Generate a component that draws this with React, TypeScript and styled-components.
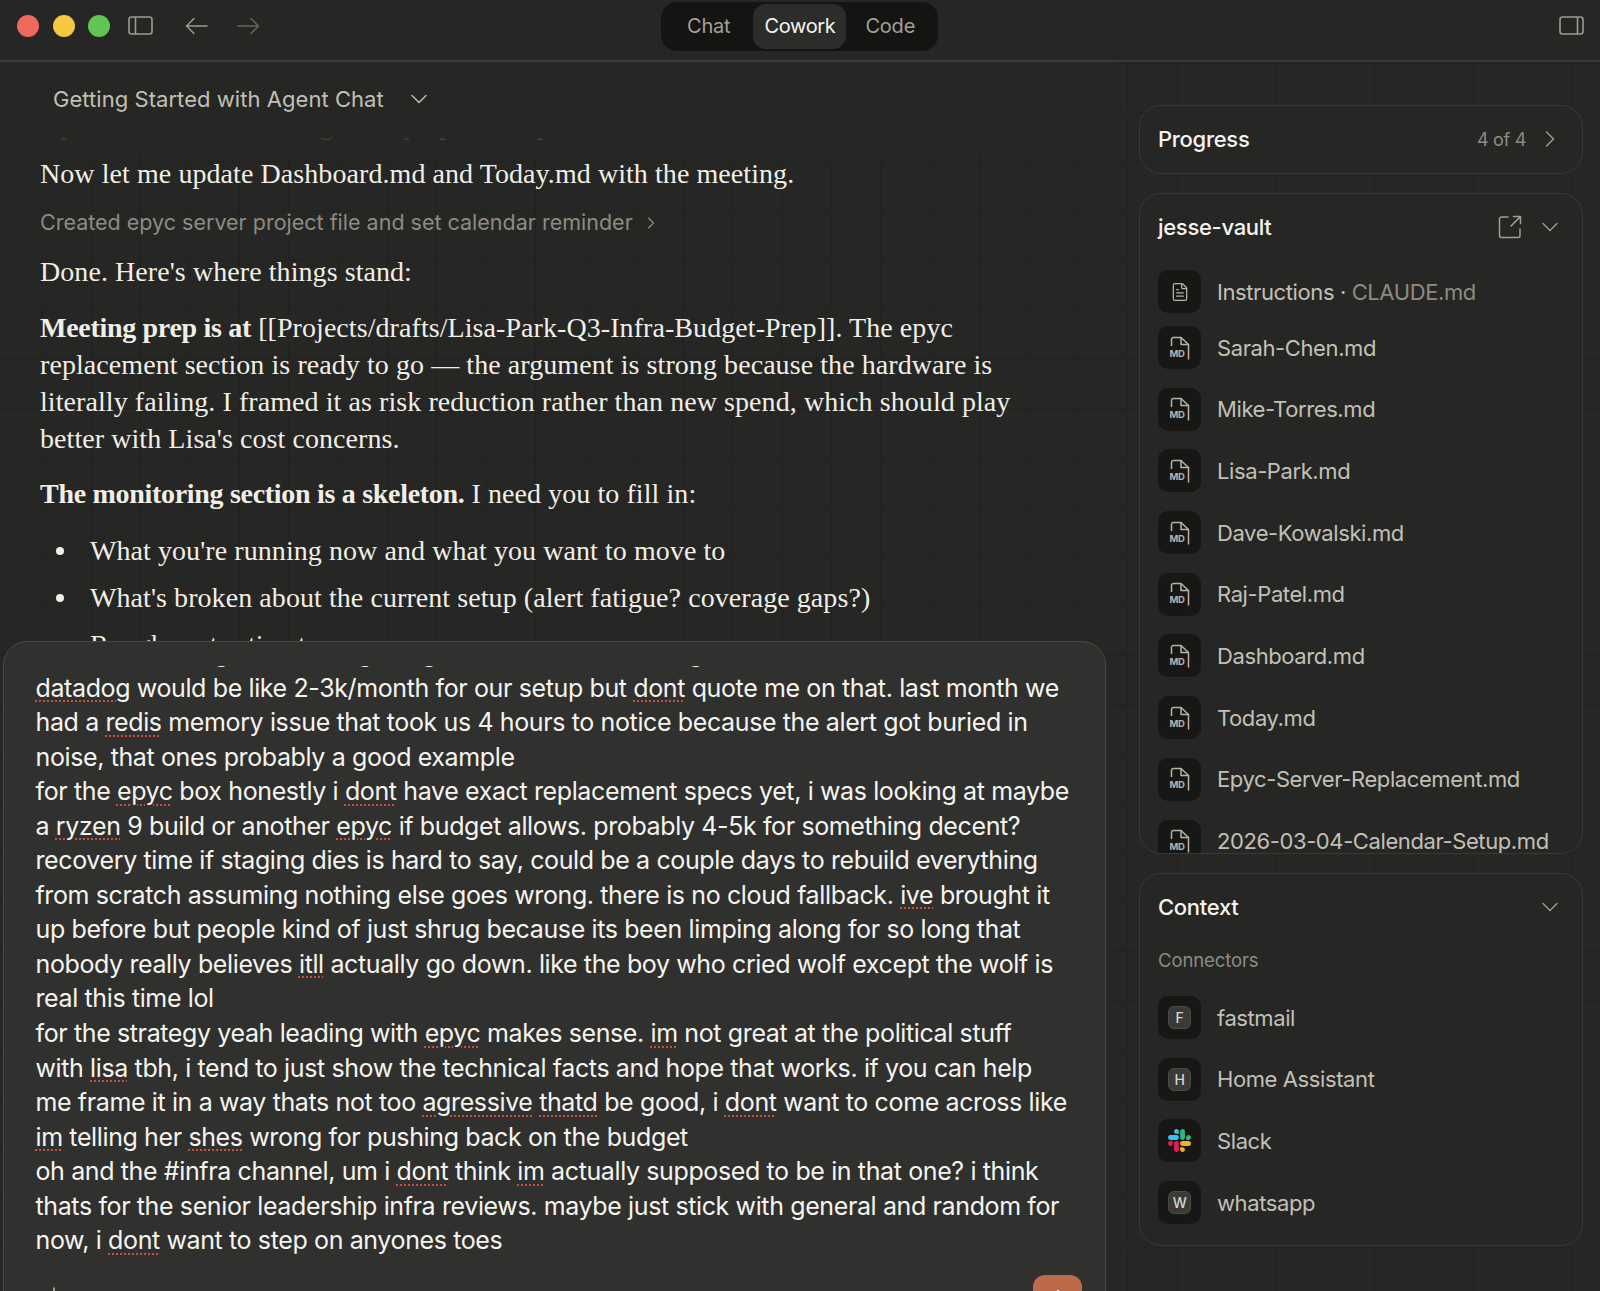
import React from "react";
import styled, { createGlobalStyle } from "styled-components";
import { ChevronDown, ChevronRight, FileText, Plus, ArrowUp } from "lucide-react";

const SANS = `"Inter", "Liberation Sans", sans-serif`;
const SERIF = `"Liberation Serif", "Noto Serif", serif`;

const Global = createGlobalStyle`
  html, body { margin: 0; padding: 0; height: 100%; background: #262624; overflow: hidden; }
  * { box-sizing: border-box; }
  #root { height: 1291px; }
`;

const Window = styled.div`
  width: 1600px;
  height: 1291px;
  display: flex;
  flex-direction: column;
  background: #262624;
  font-family: ${SANS};
  overflow: hidden;
`;

const TitleBar = styled.header`
  height: 62px;
  flex: none;
  display: grid;
  grid-template-columns: 1fr auto 1fr;
  padding: 2px 16px 0 17px;
  border-bottom: 2px solid #3b3b39;
`;

const LeftControls = styled.div`
  display: flex;
  align-items: center;
  height: 47px;
  color: #9c9a92;
`;

const Light = styled.span<{ $c: string }>`
  width: 22px;
  height: 22px;
  border-radius: 50%;
  background: ${(p) => p.$c};
  margin-right: 13.5px;
`;

const PanelToggle = styled.span`
  display: flex;
  margin-left: 4px;
`;

const NavBtn = styled.span<{ $dim?: boolean }>`
  display: flex;
  margin-left: ${(p) => (p.$dim ? "29px" : "32px")};
  color: ${(p) => (p.$dim ? "#65645f" : "#9c9a92")};
`;

const Segments = styled.nav`
  width: 277px;
  height: 49px;
  margin-right: 2px;
  display: flex;
  align-items: center;
  padding: 0 15px 0 26px;
  background: #141413;
  border-radius: 16px;
`;

const Segment = styled.span<{ $active?: boolean }>`
  height: 45px;
  display: flex;
  align-items: center;
  justify-content: center;
  padding-bottom: 1px;
  font-size: 20px;
  letter-spacing: -0.2px;
  border-radius: 13px;
  ${(p) => (p.$active ? "width: 93px; margin: 0 19px 0 23px; background: #2c2c2a; color: #f5f4ee; letter-spacing: -0.35px;" : "color: #a3a198;")}
`;

const RightControls = styled.div`
  display: flex;
  justify-content: flex-end;
  align-items: center;
  height: 47px;
  color: #9c9a92;
`;

const Main = styled.main`
  flex: 1;
  min-height: 0;
  display: flex;
  position: relative;
  background-color: #262624;
  background-image:
    linear-gradient(to right, #212120 1px, transparent 1px),
    linear-gradient(to bottom, #212120 1px, transparent 1px);
  background-size: 49.36px 49.36px;
  background-position: -8px 0.5px;
`;

const ChatColumn = styled.section`
  width: 1114px;
  flex: none;
  display: flex;
  flex-direction: column;
`;

const ChatTitle = styled.div`
  height: 74px;
  flex: none;
  display: flex;
  align-items: center;
  gap: 21px;
  padding: 0 0 0 53px;
  background: #262624;
  position: relative;
  z-index: 1;
  font-size: 22px;
  letter-spacing: 0.05px;
  color: #c2c0b6;
  &::after {
    content: "";
    position: absolute;
    left: 0;
    right: 0;
    top: 100%;
    height: 26px;
    background: linear-gradient(#262624, rgba(38, 38, 36, 0));
  }
`;

const Transcript = styled.div`
  flex: 1;
  min-height: 0;
  overflow: hidden;
  padding-left: 40px;
  font-family: ${SERIF};
  font-size: 28px;
  line-height: 37px;
  letter-spacing: 0.07px;
  color: #f0eee6;
`;

const ScrolledOff = styled.p`
  margin: -30px 0 12px;
  white-space: nowrap;
`;

const Line = styled.p`
  margin: 0 0 12px;
  white-space: nowrap;
`;

const Activity = styled.div`
  height: 37px;
  margin-bottom: 12px;
  display: flex;
  align-items: center;
  gap: 8px;
  font-family: ${SANS};
  font-size: 21.5px;
  letter-spacing: 0;
  color: #8d8b83;
`;

const Para = styled.p`
  margin: 0 0 18.5px;
  white-space: nowrap;
  strong { font-weight: 700; letter-spacing: -0.3px; }
`;

const Bullets = styled.ul`
  margin: 20px 0 0;
  padding: 0 0 0 16px;
  list-style: none;
`;

const Bullet = styled.li`
  display: flex;
  align-items: center;
  gap: 26px;
  margin-bottom: 10px;
  white-space: nowrap;
  &::before {
    content: "";
    width: 8px;
    height: 8px;
    flex: none;
    border-radius: 50%;
    background: #f0eee6;
  }
`;

const Composer = styled.section`
  position: absolute;
  left: 3px;
  top: 579px;
  width: 1103px;
  height: 740px;
  z-index: 2;
  background: #30302e;
  border: 1.5px solid #484845;
  border-radius: 24px;
  padding-top: 24px;
  display: flex;
  flex-direction: column;
`;

const Draft = styled.div`
  height: 604px;
  overflow: hidden;
  flex: none;
  padding: 0 31.5px;
  font-size: 25px;
  line-height: 34.55px;
  letter-spacing: -0.38px;
  color: #f5f4ee;
`;

const DraftScroll = styled.div`
  margin-top: -30px;
`;

const DraftLine = styled.div`
  white-space: nowrap;
`;

const Miss = styled.span`
  text-decoration: underline dotted #c8503f 2px;
  text-underline-offset: 4px;
`;

const ComposerFooter = styled.div`
  display: flex;
  justify-content: space-between;
  padding: 1px 23px 0 38px;
  color: #c2c0b6;
`;

const SendButton = styled.span`
  width: 49px;
  height: 42px;
  margin-top: 4px;
  padding-top: 11px;
  display: flex;
  align-items: flex-start;
  justify-content: center;
  background: #bd6a4b;
  color: #f5efe8;
  border-radius: 12px;
`;

const PlusWrap = styled.span`
  display: flex;
  margin-top: 12px;
`;

const Sidebar = styled.aside`
  flex: 1;
  padding: 43px 17px 0 25px;
  display: flex;
  flex-direction: column;
  gap: 19px;
`;

const Card = styled.div<{ $h: number }>`
  height: ${(p) => p.$h}px;
  flex: none;
  background: #262624;
  border: 1.5px solid #383836;
  border-radius: 22px;
  padding: 0 18px;
  overflow: hidden;
`;

const CardHead = styled.div<{ $h: number }>`
  height: ${(p) => p.$h}px;
  display: flex;
  align-items: center;
  justify-content: space-between;
`;

const CardTitle = styled.h3`
  margin: 0;
  font-size: 22px;
  font-weight: 500;
  letter-spacing: -0.3px;
  color: #f5f4ee;
`;

const CardTools = styled.div`
  display: flex;
  align-items: center;
  gap: 14px;
  color: #a09e95;
`;

const Count = styled.span`
  margin-right: -4px;
  font-size: 18px;
  letter-spacing: -0.3px;
  color: #8d8b83;
`;

const Rows = styled.div<{ $top: number }>`
  margin-top: ${(p) => p.$top}px;
  display: flex;
  flex-direction: column;
  gap: 18.7px;
`;

const Row = styled.div<{ $tight?: boolean }>`
  display: flex;
  align-items: center;
  gap: 16px;
  font-size: 22px;
  letter-spacing: -0.4px;
  color: #c2c0b6;
  ${(p) => (p.$tight ? "margin-bottom: -5.7px;" : "")}
`;

const IconBox = styled.span`
  width: 43px;
  height: 43px;
  flex: none;
  display: flex;
  align-items: center;
  justify-content: center;
  border-radius: 10px;
  background: #171716;
  color: #b5b3aa;
`;

const Letter = styled.span`
  width: 23px;
  height: 23px;
  display: flex;
  align-items: center;
  justify-content: center;
  border-radius: 6px;
  background: #3a3a38;
  border: 1px solid #4a4a47;
  color: #d6d4cb;
  font-size: 14px;
  font-weight: 500;
`;

const Dim = styled.span`
  color: #8d8b83;
`;

const Caption = styled.div`
  margin-top: 10px;
  font-size: 18.5px;
  letter-spacing: -0.1px;
  color: #8d8b83;
`;

const PanelIcon = ({ side }: { side: "left" | "right" }) => (
  <svg width="25" height="19" viewBox="0 0 25 19" fill="none" stroke="currentColor" strokeWidth="1.6">
    <rect x="1" y="1" width="23" height="17" rx="2.5" />
    <path d={side === "left" ? "M7.5 1v17" : "M18.5 1v17"} />
  </svg>
);

const NavArrow = ({ dir }: { dir: "left" | "right" }) => (
  <svg width="23" height="18" viewBox="0 0 23 18" fill="none" stroke="currentColor" strokeWidth="1.5" strokeLinecap="round" strokeLinejoin="round">
    <path d={dir === "left" ? "M22 9H1.500M9 1.500 1.500 9 9 16.500" : "M1 9h20.500M14 1.500 21.500 9 14 16.500"} />
  </svg>
);

const MdIcon = () => (
  <svg width="22" height="24" viewBox="0 0 22 24" fill="none" stroke="currentColor" strokeWidth="1.5">
    <path d="M2.500 10V3.500a2 2 0 0 1 2-2H12l7.500 7v15" strokeLinejoin="round" />
    <path d="M12 1.500V8.500h7.500" strokeLinejoin="round" />
    <text x="0.500" y="21" fontFamily="Inter, sans-serif" fontSize="9.500" fontWeight="700" fill="currentColor" stroke="none">MD</text>
  </svg>
);

const ExternalIcon = () => (
  <svg width="24" height="24" viewBox="0 0 24 24" fill="none" stroke="currentColor" strokeWidth="1.5" strokeLinecap="round" strokeLinejoin="round">
    <path d="M10 2H3.500A2 2 0 0 0 1.500 4v16.500a2 2 0 0 0 2 2H20a2 2 0 0 0 2-2V14" />
    <path d="M13 11 22.500 1.500M15.500 1.500h7v7" />
  </svg>
);

const SlackIcon = () => (
  <svg width="23" height="23" viewBox="0 0 122.800 122.800">
    <path fill="#e01e5a" d="M25.800 77.600c0 7.100-5.800 12.900-12.900 12.900S0 84.700 0 77.600s5.800-12.900 12.900-12.900h12.900v12.900zm6.500 0c0-7.100 5.800-12.900 12.900-12.900s12.900 5.800 12.900 12.900v32.300c0 7.100-5.800 12.900-12.900 12.900s-12.900-5.800-12.900-12.900V77.600z" />
    <path fill="#36c5f0" d="M45.200 25.800c-7.100 0-12.900-5.800-12.900-12.900S38.100 0 45.200 0s12.900 5.800 12.900 12.900v12.900H45.200zm0 6.500c7.100 0 12.900 5.800 12.900 12.900s-5.800 12.900-12.900 12.900H12.900C5.800 58.100 0 52.300 0 45.200s5.800-12.900 12.900-12.900h32.300z" />
    <path fill="#2eb67d" d="M97 45.200c0-7.100 5.800-12.900 12.900-12.900s12.900 5.800 12.900 12.900-5.800 12.900-12.900 12.900H97V45.200zm-6.500 0c0 7.100-5.800 12.900-12.900 12.900s-12.900-5.800-12.900-12.900V12.900C64.700 5.800 70.500 0 77.600 0s12.900 5.800 12.900 12.900v32.300z" />
    <path fill="#ecb22e" d="M77.600 97c7.100 0 12.900 5.800 12.900 12.900s-5.800 12.900-12.900 12.900-12.900-5.800-12.900-12.900V97h12.900zm0-6.500c-7.100 0-12.900-5.800-12.900-12.900s5.800-12.900 12.900-12.900h32.300c7.100 0 12.900 5.800 12.900 12.900s-5.800 12.900-12.900 12.900H77.600z" />
  </svg>
);

const DRAFT = [
  "ok so for alerting it was old, getting worse and we are long overdue for a new tool",
  "*datadog* would be like 2-3k/month for our setup but *dont* quote me on that. last month we",
  "had a *redis* memory issue that took us 4 hours to notice because the alert got buried in",
  "noise, that ones probably a good example",
  "for the *epyc* box honestly i *dont* have exact replacement specs yet, i was looking at maybe",
  "a *ryzen* 9 build or another *epyc* if budget allows. probably 4-5k for something decent?",
  "recovery time if staging dies is hard to say, could be a couple days to rebuild everything",
  "from scratch assuming nothing else goes wrong. there is no cloud fallback. *ive* brought it",
  "up before but people kind of just shrug because its been limping along for so long that",
  "nobody really believes *itll* actually go down. like the boy who cried wolf except the wolf is",
  "real this time lol",
  "for the strategy yeah leading with *epyc* makes sense. *im* not great at the political stuff",
  "with *lisa* tbh, i tend to just show the technical facts and hope that works. if you can help",
  "me frame it in a way thats not too *agressive* *thatd* be good, i *dont* want to come across like",
  "*im* telling her *shes* wrong for pushing back on the budget",
  "oh and the #infra channel, um i *dont* think *im* actually supposed to be in that one? i think",
  "thats for the senior leadership infra reviews. maybe just stick with general and random for",
  "now, i *dont* want to step on anyones toes",
];

const FILES = [
  "Sarah-Chen.md",
  "Mike-Torres.md",
  "Lisa-Park.md",
  "Dave-Kowalski.md",
  "Raj-Patel.md",
  "Dashboard.md",
  "Today.md",
  "Epyc-Server-Replacement.md",
  "2026-03-04-Calendar-Setup.md",
];

const renderLine = (line: string) =>
  line.split("*").map((part, i) => (i % 2 ? <Miss key={i}>{part}</Miss> : <React.Fragment key={i}>{part}</React.Fragment>));

export default function App() {
  return (
    <Window>
      <Global />
      <TitleBar>
        <LeftControls>
          <Light $c="#ee6a5f" />
          <Light $c="#f5c842" />
          <Light $c="#61c554" />
          <PanelToggle>
            <PanelIcon side="left" />
          </PanelToggle>
          <NavBtn><NavArrow dir="left" /></NavBtn>
          <NavBtn $dim><NavArrow dir="right" /></NavBtn>
        </LeftControls>
        <Segments>
          <Segment>Chat</Segment>
          <Segment $active>Cowork</Segment>
          <Segment>Code</Segment>
        </Segments>
        <RightControls>
          <PanelIcon side="right" />
        </RightControls>
      </TitleBar>
      <Main>
        <ChatColumn>
          <ChatTitle>
            Getting Started with Agent Chat
            <ChevronDown size={28} strokeWidth={1.2} />
          </ChatTitle>
          <Transcript>
            <ScrolledOff>Updated, and now I will get the prep doc in place.</ScrolledOff>
            <Line>Now let me update Dashboard.md and Today.md with the meeting.</Line>
            <Activity>
              Created epyc server project file and set calendar reminder
              <ChevronRight size={20} strokeWidth={1.4} />
            </Activity>
            <Para>Done. Here's where things stand:</Para>
            <Para>
              <strong>Meeting prep is at</strong> [[Projects/drafts/Lisa-Park-Q3-Infra-Budget-Prep]]. The epyc
              <br />
              replacement section is ready to go — the argument is strong because the hardware is
              <br />
              literally failing. I framed it as risk reduction rather than new spend, which should play
              <br />
              better with Lisa's cost concerns.
            </Para>
            <Para>
              <strong>The monitoring section is a skeleton.</strong> I need you to fill in:
            </Para>
            <Bullets>
              <Bullet>What you're running now and what you want to move to</Bullet>
              <Bullet>What's broken about the current setup (alert fatigue? coverage gaps?)</Bullet>
              <Bullet>Rough cost estimate</Bullet>
            </Bullets>
          </Transcript>
        </ChatColumn>
        <Composer>
          <Draft>
            <DraftScroll>
              {DRAFT.map((l, i) => (
                <DraftLine key={i}>{renderLine(l)}</DraftLine>
              ))}
            </DraftScroll>
          </Draft>
          <ComposerFooter>
            <PlusWrap><Plus size={24} strokeWidth={1.5} /></PlusWrap>
            <SendButton><ArrowUp size={24} strokeWidth={2} /></SendButton>
          </ComposerFooter>
        </Composer>
        <Sidebar>
          <Card $h={69}>
            <CardHead $h={66}>
              <CardTitle>Progress</CardTitle>
              <CardTools>
                <Count>4 of 4</Count>
                <ChevronRight size={28} strokeWidth={1.2} />
              </CardTools>
            </CardHead>
          </Card>
          <Card $h={661}>
            <CardHead $h={65}>
              <CardTitle>jesse-vault</CardTitle>
              <CardTools>
                <ExternalIcon />
                <ChevronDown size={28} strokeWidth={1.2} />
              </CardTools>
            </CardHead>
            <Rows $top={11}>
              <Row $tight>
                <IconBox><FileText size={20} strokeWidth={1.5} /></IconBox>
                <span>Instructions · <Dim>CLAUDE.md</Dim></span>
              </Row>
              {FILES.map((f) => (
                <Row key={f}>
                  <IconBox><MdIcon /></IconBox>
                  <span>{f}</span>
                </Row>
              ))}
            </Rows>
          </Card>
          <Card $h={373}>
            <CardHead $h={65}>
              <CardTitle>Context</CardTitle>
              <CardTools>
                <ChevronDown size={28} strokeWidth={1.2} />
              </CardTools>
            </CardHead>
            <Caption>Connectors</Caption>
            <Rows $top={25}>
              <Row><IconBox><Letter>F</Letter></IconBox><span>fastmail</span></Row>
              <Row><IconBox><Letter>H</Letter></IconBox><span>Home Assistant</span></Row>
              <Row><IconBox><SlackIcon /></IconBox><span>Slack</span></Row>
              <Row><IconBox><Letter>W</Letter></IconBox><span>whatsapp</span></Row>
            </Rows>
          </Card>
        </Sidebar>
      </Main>
    </Window>
  );
}
